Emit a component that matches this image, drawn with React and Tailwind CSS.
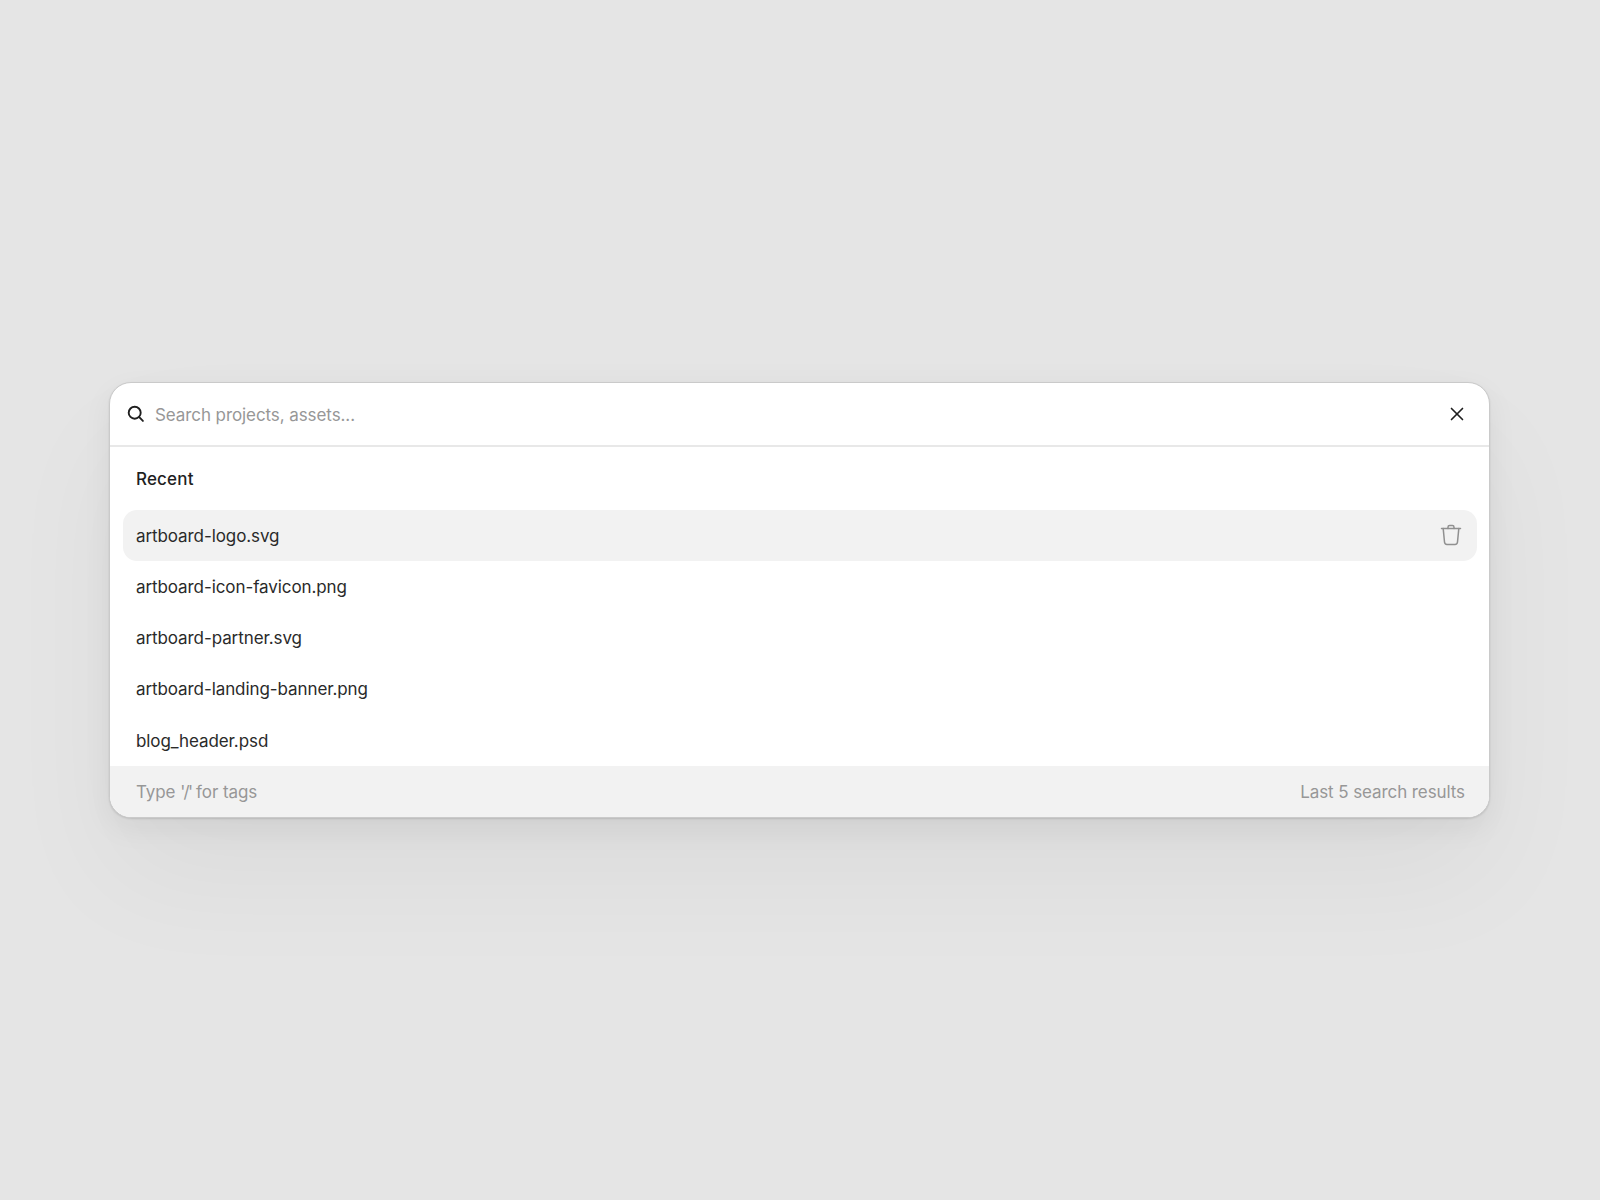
import { X } from 'lucide-react'

const recent = [
  'artboard-logo.svg',
  'artboard-icon-favicon.png',
  'artboard-partner.svg',
  'artboard-landing-banner.png',
  'blog_header.psd',
]

function SearchIcon() {
  return (
    <svg width="20" height="20" viewBox="0 0 20 20" fill="none" stroke="#1f1f1f" strokeWidth="1.9" strokeLinecap="round">
      <circle cx="8.7" cy="8.7" r="6" />
      <path d="M13.2 13.2 L16.9 16.9" />
    </svg>
  )
}

function TrashIcon() {
  return (
    <svg width="22" height="22" viewBox="0 0 22 22" fill="none" stroke="#909090" strokeWidth="1.5" strokeLinecap="round" strokeLinejoin="round">
      <path d="M1.5 4.6 H20.5" />
      <path d="M8 4.6 V3.2 C8 2.2 8.7 1.6 9.6 1.6 H12.4 C13.3 1.6 14 2.2 14 3.2 V4.6" />
      <path d="M3.2 4.6 L4.5 18 C4.6 19.5 5.4 20.4 7 20.4 H15 C16.6 20.4 17.4 19.5 17.5 18 L18.8 4.6" />
    </svg>
  )
}

export default function App() {
  return (
    <div className="min-h-[1200px] bg-[#e5e5e5] flex items-center justify-center font-['Inter',sans-serif]">
      <div className="w-[1381px] mr-[1px] bg-white rounded-[22px] border border-[#cacaca] overflow-hidden shadow-[0_1px_2px_rgba(0,0,0,0.12),0_10px_30px_rgba(0,0,0,0.06),0_60px_120px_rgba(0,0,0,0.045)]">
        {/* Search */}
        <div className="h-[64px] flex items-center pl-[16px] pr-[21px] border-b-2 border-[#e8e8e8]">
          <SearchIcon />
          <span className="ml-[9px] pt-[4px] text-[17px] tracking-[-0.005em] text-[#979797]">Search projects, assets...</span>
          <X className="ml-auto w-[22px] h-[22px] text-[#1f1f1f]" strokeWidth={1.8} />
        </div>

        <div className="pl-[13px] pr-[12px] pb-[1px]">
          <div className="h-[63px] flex items-center px-[13px] pt-[3px] text-[17px] tracking-[0.01em] font-medium text-[#1f1f1f]">Recent</div>
          {recent.map((name, i) => (
            <div
              key={name}
              className={`h-[51.2px] flex items-center justify-between pl-[13px] pr-[15px] rounded-[14px] text-[17px] tracking-[-0.005em] text-[#2a2a2a] ${i === 0 ? 'bg-[#f2f2f2]' : ''}`}
            >
              <span className="pt-[3px]">{name}</span>
              {i === 0 && <TrashIcon />}
            </div>
          ))}
        </div>

        {/* Footer */}
        <div className="h-[51px] bg-[#f2f2f2] flex items-center justify-between pl-[26px] pr-[24px] pt-[2px] text-[17px] tracking-[-0.005em] text-[#979797]">
          <span>Type <span className="tracking-[-0.1em]">'/'</span> for tags</span>
          <span>Last 5 search results</span>
        </div>
      </div>
    </div>
  )
}
